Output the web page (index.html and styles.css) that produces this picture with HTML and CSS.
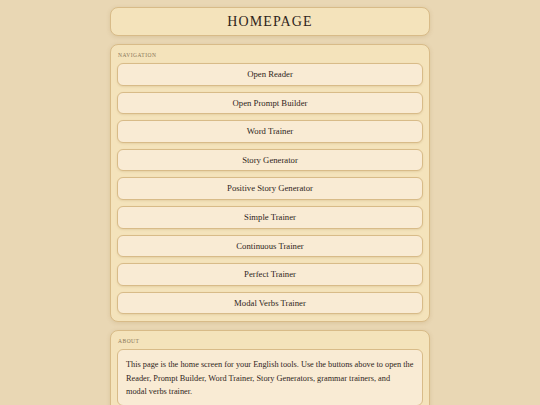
FILE: index.html
```html
<!DOCTYPE html>
<html lang="en">
<head>
<meta charset="utf-8">
<title>Homepage</title>
<link rel="stylesheet" href="styles.css">
</head>
<body>
<main class="page">
  <header class="title-card">
    <h1 class="title">HOMEPAGE</h1>
  </header>
  <section class="card">
    <h2 class="card-label">NAVIGATION</h2>
    <nav class="nav-list">
      <button class="nav-btn">Open Reader</button>
      <button class="nav-btn">Open Prompt Builder</button>
      <button class="nav-btn">Word Trainer</button>
      <button class="nav-btn">Story Generator</button>
      <button class="nav-btn">Positive Story Generator</button>
      <button class="nav-btn">Simple Trainer</button>
      <button class="nav-btn">Continuous Trainer</button>
      <button class="nav-btn">Perfect Trainer</button>
      <button class="nav-btn">Modal Verbs Trainer</button>
    </nav>
  </section>
  <section class="card">
    <h2 class="card-label">ABOUT</h2>
    <div class="about-box">
      <p class="about-text">This page is the home screen for your English tools. Use the buttons above to open the Reader, Prompt Builder, Word Trainer, Story Generators, grammar trainers, and<br>modal verbs trainer.</p>
    </div>
  </section>
</main>
</body>
</html>
```

FILE: styles.css
```css
html, body {
  margin: 0;
  padding: 0;
}
body {
  background: #e9d7b4;
  font-family: "Liberation Serif", "Times New Roman", serif;
  color: #2f251b;
}
.page {
  width: 320px;
  margin: 0 auto;
  padding-top: 7px;
  display: flex;
  flex-direction: column;
  gap: 8px;
}
.title-card {
  height: 27px;
  background: #f4e3bb;
  border: 1px solid #d8bb88;
  border-radius: 8px;
  box-shadow: 0 1px 4px rgba(150, 110, 50, 0.18);
  display: flex;
  align-items: center;
  justify-content: center;
}
.title {
  margin: 0;
  font-size: 14px;
  font-weight: normal;
  letter-spacing: 1.1px;
  line-height: 1;
  color: #2f251b;
}
.card {
  background: #f4e3bb;
  border: 1px solid #d8bb88;
  border-radius: 8px;
  box-shadow: 0 1px 4px rgba(150, 110, 50, 0.18);
  padding: 5px 6px 7px 6px;
}
.card-label {
  margin: 0 0 3px 1px;
  font-size: 5.5px;
  line-height: 10px;
  font-weight: normal;
  letter-spacing: 0.5px;
  color: #8a7658;
}
.nav-list {
  display: flex;
  flex-direction: column;
  gap: 6px;
}
.nav-btn {
  display: block;
  width: 100%;
  margin: 0;
  padding: 5px 8px;
  font-family: inherit;
  font-size: 8.7px;
  line-height: 10.6px;
  color: #2f251b;
  background: #f9ebd4;
  border: 1px solid #d8bb88;
  border-radius: 6px;
  box-shadow: 0 1px 2px rgba(150, 110, 50, 0.15);
  text-align: center;
}
.about-box {
  background: #f9ebd4;
  border: 1px solid #d8bb88;
  border-radius: 6px;
  padding: 8px 8px 6px 8px;
}
.about-text {
  margin: 0;
  font-size: 8.3px;
  line-height: 13.4px;
  color: #2f251b;
}
```
